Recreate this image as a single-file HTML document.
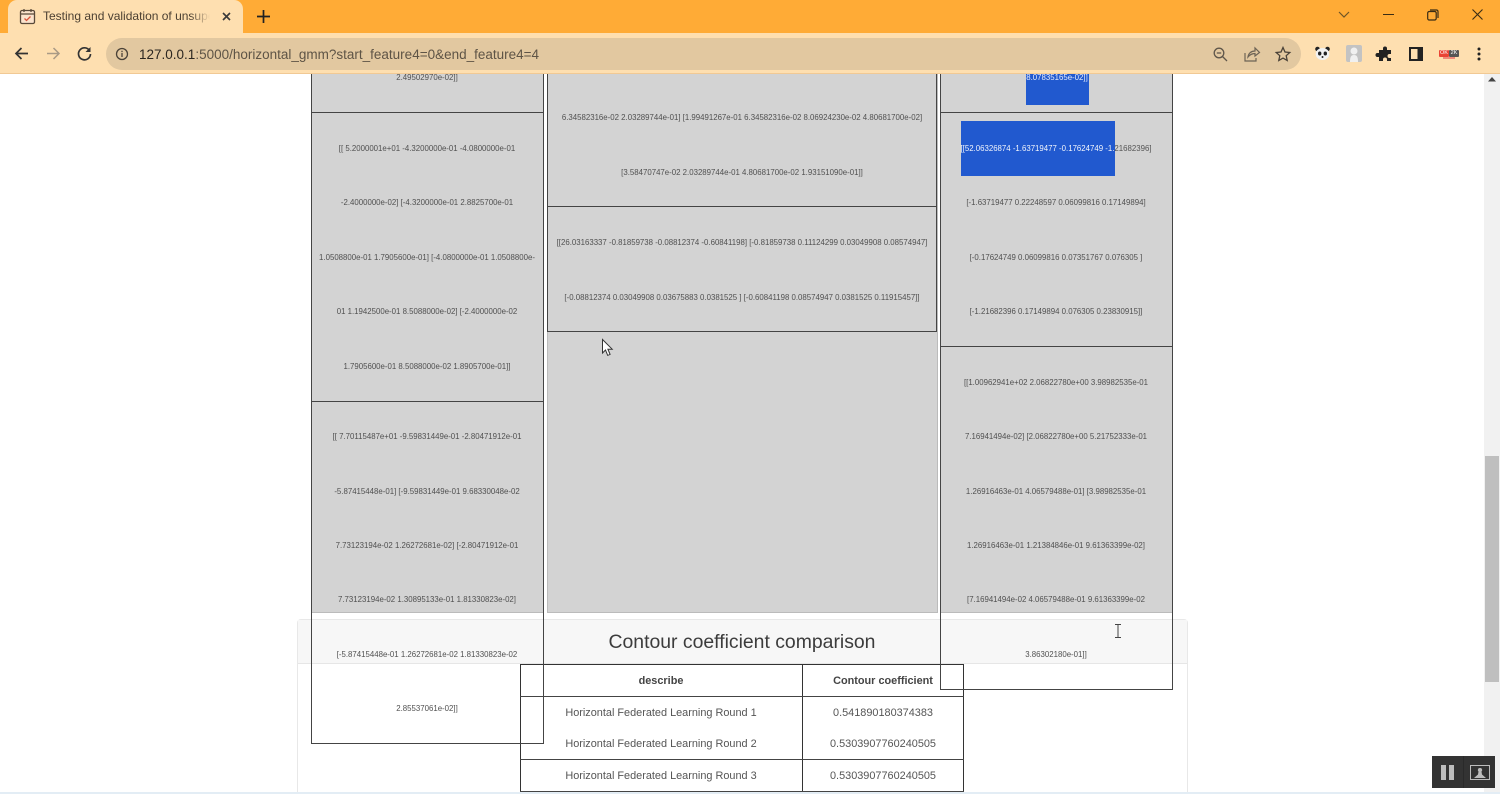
<!DOCTYPE html>
<html><head><meta charset="utf-8"><title>Testing and validation</title>
<style>
html,body{margin:0;padding:0;width:1500px;height:794px;background:#fff;font-family:"Liberation Sans",sans-serif}
body{position:relative;overflow:hidden}
html{overflow:hidden}
div{position:absolute;box-sizing:border-box}
.t{white-space:nowrap;transform:translate(-50%,calc(-50% + 1px));font-size:7.85px;color:#505050;line-height:12px;filter:blur(.25px)}
.g{background:#d3d3d3;border-bottom:1px solid #bbb}
.h{background:#444;height:1px}
.v{background:#333;width:1px}
.c{white-space:nowrap;transform:translate(-50%,-50%);font-size:10.9px;color:#555;line-height:14px;filter:blur(.2px)}
svg{position:absolute;overflow:visible}
</style></head><body>
<!-- page -->
<div style="left:297px;top:619px;width:891px;height:175px;border:1px solid #e8e8e8;border-bottom:0;border-radius:4px 4px 0 0;background:#fff"></div>
<div style="left:298px;top:620px;width:889px;height:44px;background:#f7f7f7;border-bottom:1px solid #e6e6e6"></div>
<div class="g" style="left:311px;top:70px;width:233px;height:543px"></div>
<div class="g" style="left:547px;top:70px;width:391px;height:543px;border-right:1px solid #bbb;border-left:1px solid #bbb"></div>
<div class="g" style="left:940px;top:70px;width:233px;height:543px"></div>

<div style="left:1026px;top:70px;width:63px;height:35px;background:#2159cf"></div>
<div style="left:961px;top:121px;width:154px;height:55px;background:#2159cf"></div>

<div style="left:742px;top:642px;transform:translate(-50%,-50%);white-space:nowrap;font-size:19.4px;color:#3c3c3c;line-height:24px">Contour coefficient comparison</div>

<!-- table -->
<div style="left:520px;top:664px;width:444px;height:130px;border:1px solid #333;border-bottom:0"></div>
<div class="v" style="left:802px;top:664px;height:130px"></div>
<div class="h" style="left:520px;top:696px;width:444px"></div>
<div class="h" style="left:520px;top:759px;width:444px"></div>
<div class="h" style="left:520px;top:791px;width:444px"></div>
<div class="c" style="left:661px;top:681px;font-weight:bold;color:#444">describe</div>
<div class="c" style="left:883px;top:681px;font-weight:bold;color:#444">Contour coefficient</div>
<div class="c" style="left:661px;top:713px">Horizontal Federated Learning Round 1</div>
<div class="c" style="left:883px;top:713px">0.541890180374383</div>
<div class="c" style="left:661px;top:744px">Horizontal Federated Learning Round 2</div>
<div class="c" style="left:883px;top:744px">0.5303907760240505</div>
<div class="c" style="left:661px;top:776px">Horizontal Federated Learning Round 3</div>
<div class="c" style="left:883px;top:776px">0.5303907760240505</div>

<!-- overflow cell frames -->
<div class="v" style="left:311px;top:70px;height:674px;background:#444"></div>
<div class="v" style="left:543px;top:70px;height:674px;background:#444"></div>
<div class="h" style="left:311px;top:112px;width:233px"></div>
<div class="h" style="left:311px;top:401px;width:233px"></div>
<div class="h" style="left:311px;top:743px;width:233px"></div>
<div class="v" style="left:547px;top:70px;height:262px;background:#444"></div>
<div class="v" style="left:936px;top:70px;height:262px;background:#444"></div>
<div class="h" style="left:547px;top:206px;width:390px"></div>
<div class="h" style="left:547px;top:331px;width:390px"></div>
<div class="v" style="left:940px;top:70px;height:620px;background:#444"></div>
<div class="v" style="left:1172px;top:70px;height:620px;background:#444"></div>
<div class="h" style="left:940px;top:112px;width:233px"></div>
<div class="h" style="left:940px;top:346px;width:233px"></div>
<div class="h" style="left:940px;top:689px;width:233px"></div>

<!-- left -->
<div class="t" style="left:427px;top:77px">2.49502970e-02]]</div>
<div class="t" style="left:427px;top:148px">[[ 5.2000001e+01 -4.3200000e-01 -4.0800000e-01</div>
<div class="t" style="left:427px;top:202px">-2.4000000e-02] [-4.3200000e-01 2.8825700e-01</div>
<div class="t" style="left:427px;top:257px">1.0508800e-01 1.7905600e-01] [-4.0800000e-01 1.0508800e-</div>
<div class="t" style="left:427px;top:311px">01 1.1942500e-01 8.5088000e-02] [-2.4000000e-02</div>
<div class="t" style="left:427px;top:366px">1.7905600e-01 8.5088000e-02 1.8905700e-01]]</div>
<div class="t" style="left:427px;top:436px">[[ 7.70115487e+01 -9.59831449e-01 -2.80471912e-01</div>
<div class="t" style="left:427px;top:491px">-5.87415448e-01] [-9.59831449e-01 9.68330048e-02</div>
<div class="t" style="left:427px;top:545px">7.73123194e-02 1.26272681e-02] [-2.80471912e-01</div>
<div class="t" style="left:427px;top:599px">7.73123194e-02 1.30895133e-01 1.81330823e-02]</div>
<div class="t" style="left:427px;top:654px">[-5.87415448e-01 1.26272681e-02 1.81330823e-02</div>
<div class="t" style="left:427px;top:708px">2.85537061e-02]]</div>
<!-- middle -->
<div class="t" style="left:742px;top:117px">6.34582316e-02 2.03289744e-01] [1.99491267e-01 6.34582316e-02 8.06924230e-02 4.80681700e-02]</div>
<div class="t" style="left:742px;top:172px">[3.58470747e-02 2.03289744e-01 4.80681700e-02 1.93151090e-01]]</div>
<div class="t" style="left:742px;top:242px">[[26.03163337 -0.81859738 -0.08812374 -0.60841198] [-0.81859738 0.11124299 0.03049908 0.08574947]</div>
<div class="t" style="left:742px;top:297px">[-0.08812374 0.03049908 0.03675883 0.0381525 ] [-0.60841198 0.08574947 0.0381525 0.11915457]]</div>
<!-- right -->
<div class="t" style="left:1057px;top:77px;color:#e8eefc">8.07835165e-02]]</div>
<div class="t" style="left:1056px;top:148px;background:linear-gradient(90deg,#fff 0,#fff 154px,#505050 154px);-webkit-background-clip:text;background-clip:text;color:transparent">[[52.06326874 -1.63719477 -0.17624749 -1.21682396]</div>
<div class="t" style="left:1056px;top:202px">[-1.63719477 0.22248597 0.06099816 0.17149894]</div>
<div class="t" style="left:1056px;top:257px">[-0.17624749 0.06099816 0.07351767 0.076305 ]</div>
<div class="t" style="left:1056px;top:311px">[-1.21682396 0.17149894 0.076305 0.23830915]]</div>
<div class="t" style="left:1056px;top:382px">[[1.00962941e+02 2.06822780e+00 3.98982535e-01</div>
<div class="t" style="left:1056px;top:436px">7.16941494e-02] [2.06822780e+00 5.21752333e-01</div>
<div class="t" style="left:1056px;top:491px">1.26916463e-01 4.06579488e-01] [3.98982535e-01</div>
<div class="t" style="left:1056px;top:545px">1.26916463e-01 1.21384846e-01 9.61363399e-02]</div>
<div class="t" style="left:1056px;top:599px">[7.16941494e-02 4.06579488e-01 9.61363399e-02</div>
<div class="t" style="left:1056px;top:654px">3.86302180e-01]]</div>

<!-- cursors -->
<svg style="left:602px;top:339px" width="12" height="18" viewBox="0 0 12 18"><path d="M.5.5V14l3-3 2.2 5.4 2.4-1-2.2-5.200h4.300z" fill="#fff" stroke="#333"/></svg>
<svg style="left:1114px;top:624px" width="8" height="14" viewBox="0 0 8 14"><path d="M1 .5h6M4 .5v13M1 13.500h6" fill="none" stroke="#444"/></svg>

<!-- scrollbar -->
<div style="left:1484px;top:74px;width:16px;height:720px;background:#f1f1f1"></div>
<div style="left:1485px;top:456px;width:14px;height:226px;background:#bfbfbf"></div>
<svg style="left:1488px;top:76px" width="8" height="6" viewBox="0 0 8 6"><path d="M4 1 8 5.500H0z" fill="#444"/></svg>
<div style="left:0;top:792px;width:1500px;height:2px;background:#e3edf5"></div>

<!-- recorder -->
<div style="left:1432px;top:756px;width:63px;height:32px;background:#333"></div>
<div style="left:1463px;top:756px;width:1px;height:32px;background:#2a2a2a"></div>
<div style="left:1441px;top:765px;width:5px;height:15px;background:#bdbdbd"></div>
<div style="left:1449px;top:765px;width:5px;height:15px;background:#bdbdbd"></div>
<svg style="left:1470px;top:765px" width="20" height="15" viewBox="0 0 20 15"><path d="M.5.500h19v14H.500z" fill="none" stroke="#bdbdbd"/><path d="M10 3a2 2 0 0 1 1.500 3.500l.5 3 4 3.500H4l4-3.500.5-3A2 2 0 0 1 10 3z" fill="#bdbdbd"/></svg>

<!-- browser chrome -->
<div style="left:0;top:0;width:1500px;height:33px;background:#ffab36"></div>
<div style="left:0;top:33px;width:1500px;height:41px;background:#fedfb0;border-bottom:1px solid #f1c994"></div>
<div style="left:8px;top:0;width:235px;height:34px;background:#fedfb0;border-radius:9px 9px 0 0"></div>
<svg style="left:19px;top:8px" width="17" height="17" viewBox="0 0 17 17"><rect x="1.500" y="2.500" width="14" height="13" rx="1.500" fill="#fbe3cc" stroke="#5a4a3a" stroke-width="1.300"/><path d="M1.500 6h14M5 1v3M12 1v3" stroke="#5a4a3a" stroke-width="1.300"/><path d="M5.500 10.500l2 2 4-4" fill="none" stroke="#d8533a" stroke-width="1.300"/></svg>
<div style="left:43px;top:8px;width:167px;height:17px;overflow:hidden;white-space:nowrap;font-size:12px;line-height:17px;color:#4c4032">Testing and validation of unsupervised</div>
<div style="left:190px;top:8px;width:20px;height:17px;background:linear-gradient(90deg,rgba(254,223,176,0),#fedfb0)"></div>
<svg style="left:222px;top:12px" width="9" height="9" viewBox="0 0 9 9"><path d="M1 1l7 7M8 1L1 8" stroke="#3a3a3a" stroke-width="1.600"/></svg>
<svg style="left:257px;top:10px" width="13" height="13" viewBox="0 0 13 13"><path d="M6.500 0v13M0 6.500h13" stroke="#222" stroke-width="1.700"/></svg>

<svg style="left:14px;top:46px" width="15" height="15" viewBox="0 0 15 15"><path d="M14 7.500H2M7.500 2 2 7.500 7.500 13" fill="none" stroke="#333" stroke-width="1.700"/></svg>
<svg style="left:46px;top:46px" width="15" height="15" viewBox="0 0 15 15"><path d="M1 7.500h12M7.500 2 13 7.500 7.500 13" fill="none" stroke="#a99a85" stroke-width="1.500"/></svg>
<svg style="left:77px;top:46px" width="15" height="15" viewBox="0 0 15 15"><path d="M12.500 4.500A6 6 0 1 0 13.500 8" fill="none" stroke="#333" stroke-width="1.700"/><path d="M13.500 1v5h-5z" fill="#333"/></svg>

<div style="left:106px;top:38px;width:1195px;height:32px;background:#e2c8a0;border-radius:16px"></div>
<svg style="left:115px;top:47px" width="14" height="14" viewBox="0 0 14 14"><circle cx="7" cy="7" r="5.500" fill="none" stroke="#4a4238" stroke-width="1.300"/><path d="M7 6v4M7 3.800v1.300" stroke="#4a4238" stroke-width="1.300"/></svg>
<div style="left:139px;top:46px;white-space:nowrap;font-size:13.5px;line-height:18px;color:#5e5446"><span style="color:#2b2620">127.0.0.1</span>:5000/horizontal_gmm?start_feature4=0&amp;end_feature4=4</div>

<svg style="left:1213px;top:47px" width="15" height="15" viewBox="0 0 15 15"><circle cx="6" cy="6" r="4.800" fill="none" stroke="#5f564a" stroke-width="1.300"/><path d="M9.500 9.500l4.500 4.500M3.800 6h4.400" stroke="#5f564a" stroke-width="1.300"/></svg>
<svg style="left:1244px;top:46px" width="16" height="16" viewBox="0 0 16 16"><path d="M1 7v8h11v-3" fill="none" stroke="#6d6355" stroke-width="1.200"/><path d="M4 11c.5-4 3.500-6 7-6V2l4.500 4.500L11 10V7.500c-3 0-5 1-7 3.500z" fill="none" stroke="#6d6355" stroke-width="1.200"/></svg>
<svg style="left:1275px;top:46px" width="16" height="16" viewBox="0 0 16 16"><path d="M8 1.500l2 4.500 4.800.5-3.600 3.200 1 4.800L8 12.100l-4.200 2.400 1-4.800L1.200 6.500 6 6z" fill="none" stroke="#4a4238" stroke-width="1.300"/></svg>

<svg style="left:1315px;top:46px" width="15" height="15" viewBox="0 0 15 15"><circle cx="2.500" cy="3" r="2.300" fill="#222"/><circle cx="12.500" cy="3" r="2.300" fill="#222"/><ellipse cx="7.500" cy="8" rx="6.800" ry="6" fill="#f2f2f2"/><ellipse cx="4.700" cy="7.500" rx="1.700" ry="2" fill="#222"/><ellipse cx="10.300" cy="7.500" rx="1.700" ry="2" fill="#222"/><circle cx="7.500" cy="11" r="1" fill="#222"/></svg>
<div style="left:1346px;top:45px;width:16px;height:17px;background:#c3c3c3;border-radius:2px"></div>
<svg style="left:1346px;top:45px" width="16" height="17" viewBox="0 0 16 17"><circle cx="8" cy="6" r="3.500" fill="#f0f0f0"/><path d="M4 17c0-5 1-7 4-7s4 2 4 7z" fill="#f0f0f0"/></svg>
<svg style="left:1377px;top:46px" width="16" height="16" viewBox="0 0 16 16"><path d="M6 2.500a2 2 0 0 1 4 0V4h4v4h-1.500a2 2 0 0 0 0 4H14v3H10v-1.500a2 2 0 0 0-4 0V15H2v-4H.500a2 2 0 0 1 0-4H2V4h4z" fill="#222"/></svg>
<svg style="left:1409px;top:47px" width="14" height="14" viewBox="0 0 14 14"><path d="M1 1h12v12H1z" fill="none" stroke="#222" stroke-width="2"/><path d="M8.500 1H13v12H8.500z" fill="#222"/></svg>
<div style="left:1439px;top:50px;width:10px;height:7px;background:#ea4335;border-radius:1px;font-size:5.500px;line-height:7px;color:#fff;text-align:center">OK</div>
<div style="left:1449px;top:50px;width:10px;height:7px;background:#555;border-radius:1px;font-size:5.500px;line-height:7px;color:#fff;text-align:center">2K</div>
<div style="left:1443px;top:57px;width:12px;height:2px;background:#f08a7a"></div>
<svg style="left:1477px;top:47px" width="4" height="14" viewBox="0 0 4 14"><circle cx="2" cy="2" r="1.500" fill="#222"/><circle cx="2" cy="7" r="1.500" fill="#222"/><circle cx="2" cy="12" r="1.500" fill="#222"/></svg>

<svg style="left:1338px;top:11px" width="12" height="8" viewBox="0 0 12 8"><path d="M1 1l5 5 5-5" fill="none" stroke="#6d5427" stroke-width="1.200"/></svg>
<div style="left:1383px;top:14px;width:11px;height:1px;background:#3a2c14"></div>
<svg style="left:1427px;top:9px" width="12" height="12" viewBox="0 0 12 12"><rect x=".7" y="2.500" width="8.500" height="8.500" rx="1.500" fill="none" stroke="#3a2c14" stroke-width="1.200"/><path d="M3 1h6.500A1.500 1.500 0 0 1 11 2.500V9" fill="none" stroke="#3a2c14" stroke-width="1.200"/></svg>
<svg style="left:1472px;top:9px" width="11" height="11" viewBox="0 0 11 11"><path d="M.5.500l10 10M10.500.500l-10 10" stroke="#3a2c14" stroke-width="1.100"/></svg>
</body></html>
